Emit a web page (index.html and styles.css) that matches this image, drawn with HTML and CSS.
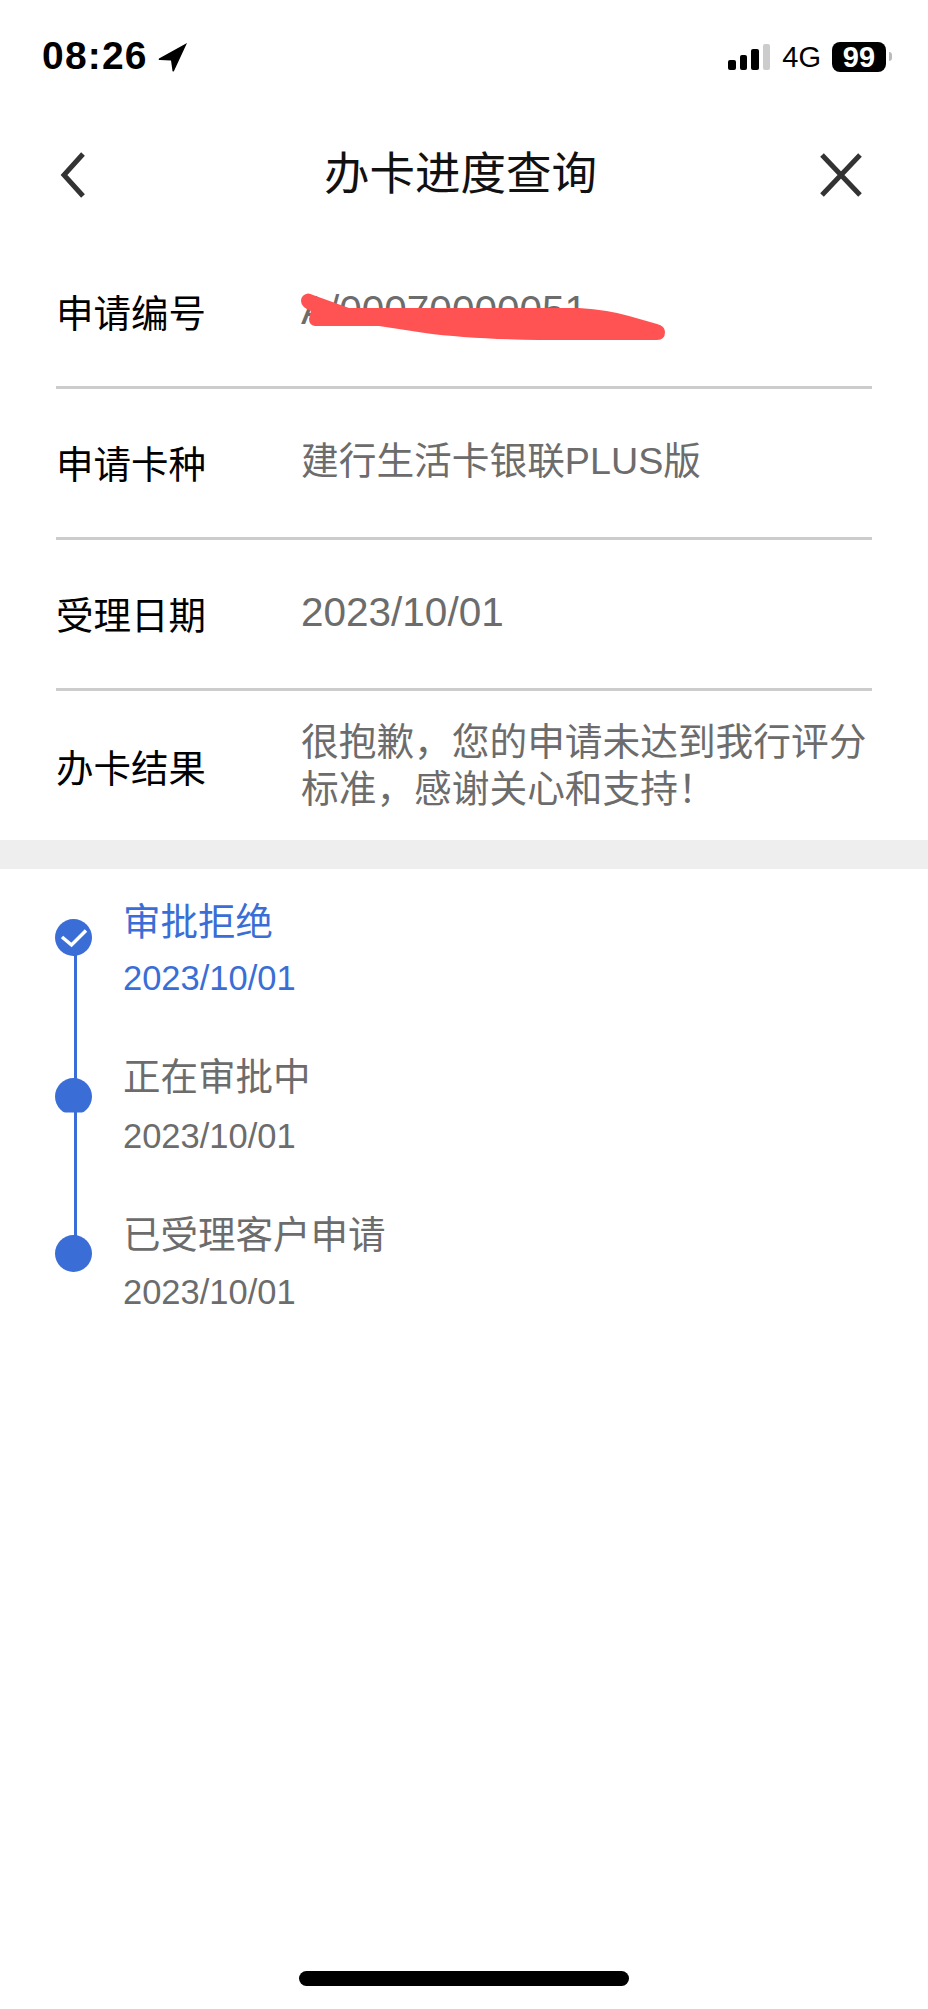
FILE: index.html
```html
<!DOCTYPE html>
<html lang="zh-CN">
<head>
<meta charset="utf-8">
<title>办卡进度查询</title>
<link rel="stylesheet" href="styles.css">
</head>
<body>
<div class="page">
  <header class="status">
    <div class="status-left">
      <span class="time">08:26</span>
      <svg class="loc" width="30" height="30" viewBox="0 0 30 30"><path d="M29 1 L1 16.5 Q0 18 2 18 L13 18.5 L14.5 29 Q15 30 16 29 Z" fill="#000"/></svg>
    </div>
    <div class="status-right">
      <div class="signal"><i class="b1"></i><i class="b2"></i><i class="b3"></i><i class="b4"></i></div>
      <span class="net">4G</span>
      <span class="battery">99</span>
      <span class="nub"></span>
    </div>
  </header>
  <nav class="nav">
    <svg class="nav-icon" width="30" height="48" viewBox="0 0 30 48"><path d="M25 3 L6 24 L25 45" fill="none" stroke="#333" stroke-width="5"/></svg>
    <h1 class="nav-title">办卡进度查询</h1>
    <svg class="nav-icon nav-close" width="44" height="44" viewBox="0 0 44 44"><path d="M3 2 L41 42 M41 2 L3 42" fill="none" stroke="#333" stroke-width="5"/></svg>
  </nav>
  <section class="info">
    <div class="row row-first">
      <span class="label">申请编号</span>
      <span class="value value-num">A/00070000051</span>
      <svg class="scribble" width="370" height="50" viewBox="0 0 370 50"><path d="M5 2 Q9 -1 14 2 L50 15 L280 15 Q310 17 330 23 L358 31 Q366 33 366 39 Q366 47 358 47 L240 47 Q170 46 126 40 L80 33 L16 33 Q10 32 10 26 L12 18 Q2 14 2 8 Q2 4 5 2 Z" fill="#ff5252"/></svg>
    </div>
    <div class="row">
      <span class="label">申请卡种</span>
      <span class="value">建行生活卡银联PLUS版</span>
    </div>
    <div class="row">
      <span class="label">受理日期</span>
      <span class="value value-num">2023/10/01</span>
    </div>
    <div class="row row-last">
      <span class="label">办卡结果</span>
      <span class="value value-wrap">很抱歉，您的申请未达到我行评分标准，感谢关心和支持！</span>
    </div>
  </section>
  <div class="band"></div>
  <section class="timeline">
    <div class="rail"></div>
    <div class="step step-active step-a">
      <span class="dot">
        <svg width="37" height="37" viewBox="0 0 37 37"><path d="M7 18 L16.5 26 L31 11.5" fill="none" stroke="#fff" stroke-width="3.5"/></svg>
      </span>
      <div class="step-text">
        <div class="step-title">审批拒绝</div>
        <div class="step-date">2023/10/01</div>
      </div>
    </div>
    <div class="step step-b">
      <span class="dot dot-clip"></span>
      <div class="step-text">
        <div class="step-title">正在审批中</div>
        <div class="step-date">2023/10/01</div>
      </div>
    </div>
    <div class="step step-c">
      <span class="dot"></span>
      <div class="step-text">
        <div class="step-title">已受理客户申请</div>
        <div class="step-date">2023/10/01</div>
      </div>
    </div>
  </section>
  <div class="home"></div>
</div>
</body>
</html>
```

FILE: styles.css
```css
* { box-sizing: border-box; }
html, body { margin: 0; padding: 0; background: #fff; }
.page {
  position: relative;
  width: 928px;
  height: 2009px;
  overflow: hidden;
  font-family: "Liberation Sans", "Noto Sans CJK SC", sans-serif;
  color: #000;
}
.status {
  height: 112px;
  padding: 36px 36px 0 42px;
  display: flex;
  justify-content: space-between;
  align-items: flex-start;
}
.status-left { display: flex; align-items: center; gap: 10px; height: 40px; }
.time { font-size: 39px; font-weight: 700; line-height: 40px; letter-spacing: 1.2px; }
.loc { margin-top: 2px; }
.status-right { display: flex; align-items: flex-end; height: 36px; }
.signal { display: flex; align-items: flex-end; gap: 4px; height: 26px; margin-bottom: 2px; }
.signal i { display: block; width: 7.5px; border-radius: 2px; background: #000; }
.signal .b1 { height: 10px; }
.signal .b2 { height: 15px; }
.signal .b3 { height: 21px; }
.signal .b4 { height: 26px; background: #ccc; }
.net { font-size: 29px; line-height: 30px; margin-left: 12px; }
.battery {
  width: 54px;
  height: 30px;
  margin-left: 11px;
  border-radius: 8px;
  background: #000;
  color: #fff;
  font-size: 29px;
  font-weight: 700;
  line-height: 30px;
  text-align: center;
}
.nub { width: 3px; height: 9px; margin: 0 0 11px 3px; background: #bbb; border-radius: 0 3px 3px 0; }
.nav {
  height: 126px;
  padding: 0 65px 0 58px;
  display: grid;
  grid-template-columns: 1fr auto 1fr;
  align-items: center;
}
.nav-close { justify-self: end; }
.nav-title {
  margin: 0;
  font-size: 45.5px;
  font-weight: 400;
  line-height: 60px;
  color: #111;
}
.info { padding: 0 56px; }
.row {
  position: relative;
  height: 151px;
  padding-bottom: 3px;
  display: flex;
  align-items: center;
  border-bottom: 3px solid #ccc;
}
.row-first { padding-bottom: 4px; }
.row-last { height: 149px; padding-bottom: 0; border-bottom: 0; }
.label { width: 245px; flex: none; font-size: 37.5px; color: #000; }
.value { font-size: 37.7px; line-height: 47px; color: #6c6c6c; }
.value-num { font-size: 40.5px; }
.value-wrap { width: 572px; }
.scribble { position: absolute; left: 243px; top: 55px; }
.band { height: 29px; background: #eee; }
.timeline { position: relative; padding: 0 0 0 55px; }
.rail {
  position: absolute;
  left: 74px;
  top: 68px;
  width: 3px;
  height: 316px;
  background: #3a6ed6;
}
.step { position: relative; display: flex; gap: 31px; }
.step-a { padding-top: 28px; }
.step-b { padding-top: 52px; }
.step-c { padding-top: 52px; }
.dot {
  flex: none;
  width: 37px;
  height: 37px;
  border-radius: 50%;
  background: #3a6ed6;
}
.dot svg { display: block; }
.step-a .dot { margin-top: 22px; }
.step-b .dot { margin-top: 26px; }
.step-c .dot { margin-top: 24.5px; }
.dot-clip { clip-path: inset(0 0 2.5px 0); }
.step-title { font-size: 37.5px; line-height: 50px; color: #6c6c6c; }
.step-date { font-size: 34.5px; line-height: 44px; margin-top: 9px; color: #6c6c6c; }
.step-b .step-date { margin-top: 12px; }
.step-c .step-date { margin-top: 10px; }
.step-active .step-title,
.step-active .step-date { color: #3a6ed6; }
.home {
  position: absolute;
  left: 299px;
  top: 1971px;
  width: 330px;
  height: 15px;
  border-radius: 8px;
  background: #000;
}
```
